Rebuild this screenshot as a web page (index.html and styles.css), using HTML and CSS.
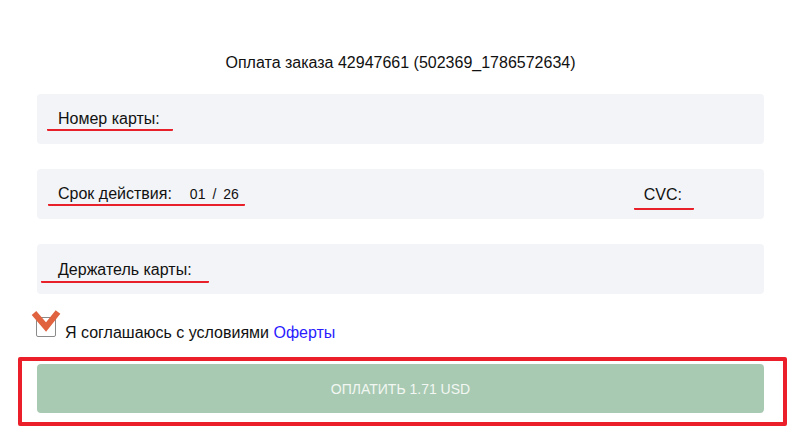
FILE: index.html
```html
<!DOCTYPE html>
<html lang="ru">
<head>
<meta charset="utf-8">
<link rel="stylesheet" href="styles.css">
</head>
<body>
<div class="page">
  <div class="title">Оплата заказа 42947661 (502369_1786572634)</div>
  <div class="cards">
    <div class="card">
      <span class="label l-num">Номер карты:</span>
    </div>
    <div class="card card-split">
      <span class="label l-exp">Срок действия:<span class="exp"><span>01</span><span class="slash">/</span><span>26</span></span></span>
      <span class="label l-cvc">CVC:</span>
    </div>
    <div class="card">
      <span class="label l-holder">Держатель карты:</span>
    </div>
  </div>
  <div class="agree">
    <span class="check">
      <span class="box"></span>
      <svg class="tick" width="30" height="26" viewBox="0 0 30 26"><path d="M3 4 L15 18 L27 3" fill="none" stroke="#e0623f" stroke-width="6" stroke-linejoin="miter"/></svg>
    </span>
    <span class="agree-text">Я соглашаюсь с условиями <a class="offer" href="#">Оферты</a></span>
  </div>
  <div class="highlight">
    <div class="pay">ОПЛАТИТЬ 1.71 USD</div>
  </div>
</div>
</body>
</html>
```

FILE: styles.css
```css
html, body {
  margin: 0;
  padding: 0;
  background: #ffffff;
}
body {
  font-family: "Liberation Sans", Arial, sans-serif;
  color: #111;
}
.page {
  width: 727px;
  padding: 52px 0 0 37px;
}
.title {
  text-align: center;
  font-size: 16px;
  line-height: 22px;
  margin-bottom: 20px;
}
.cards {
  display: flex;
  flex-direction: column;
  gap: 25px;
}
.card {
  height: 50px;
  background: #f3f4f7;
  border-radius: 4px;
  display: flex;
  align-items: center;
  box-sizing: border-box;
  padding-top: 2px;
}
.card-split {
  justify-content: space-between;
  padding-right: 70px;
}
.label {
  font-size: 16px;
  line-height: 18px;
  padding-bottom: 1px;
  border-bottom: 2px solid #e8202a;
  border-radius: 1px;
}
.l-num { margin-left: 10px; padding-left: 11px; padding-right: 13px; }
.l-exp { margin-left: 11px; padding-left: 10px; padding-right: 6px; display: flex; align-items: baseline; }
.exp { display: flex; margin-left: 18px; font-size: 14px; }
.slash { margin: 0 7px 0 7px; }
.l-cvc { padding: 0 12px 4px 10px; margin-top: 6px; }
.l-holder { margin-left: 4px; padding: 0 17px 2px 17px; margin-top: 4px; }
.agree {
  display: flex;
  align-items: flex-start;
  margin-top: 17px;
  height: 30px;
}
.check {
  position: relative;
  width: 21px;
  height: 21px;
  margin-right: 8px;
  margin-top: 6px;
  margin-left: -1px;
}
.box {
  display: block;
  width: 18px;
  height: 18px;
  border: 1.5px solid #8a8a8a;
  border-radius: 2px;
  background: #fff;
}
.tick {
  position: absolute;
  left: -5px;
  top: -8px;
}
.agree-text {
  font-size: 16px;
  line-height: 18px;
  margin-top: 13px;
}
.offer {
  color: #2b1bff;
  text-decoration: none;
}
.highlight {
  margin: 16px -23px 0 -19px;
  border: 4px solid #ea1f2a;
  border-radius: 2px;
  padding: 3px 19px 9px 15px;
}
.pay {
  height: 49px;
  background: #a8cab2;
  border-radius: 4px;
  color: #f2f7f3;
  font-size: 14px;
  display: flex;
  align-items: center;
  justify-content: center;
}
```
